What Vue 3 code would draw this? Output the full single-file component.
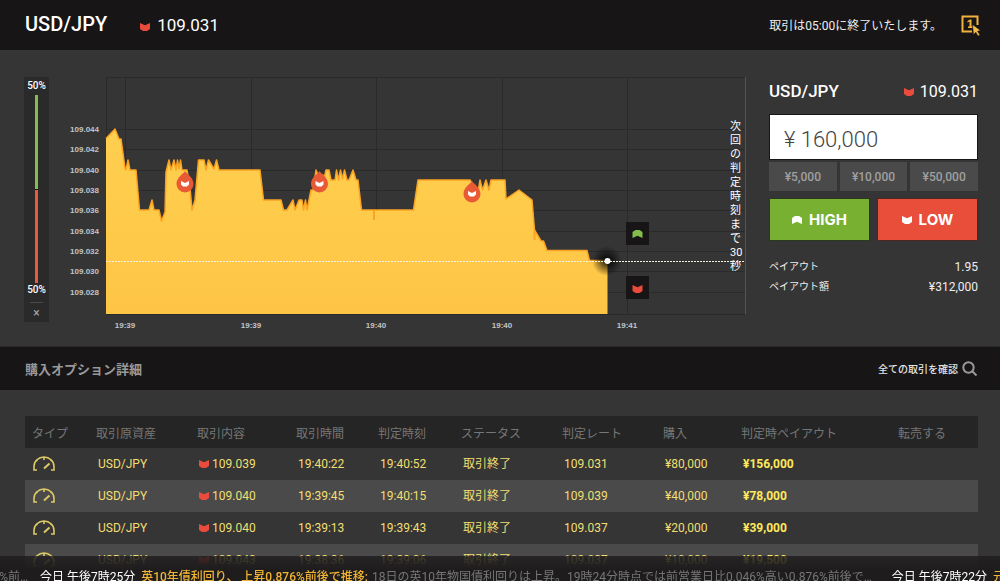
<script setup>
import { ref } from 'vue'

const amount = ref('¥ 160,000')
const presets = ['¥5,000', '¥10,000', '¥50,000']
const countdown = ['次', '回', 'の', '判', '定', '時', '刻', 'ま', 'で', '30', '秒']

const priceTicks = [
  { y: 129, label: '109.044' },
  { y: 149, label: '109.042' },
  { y: 170, label: '109.040' },
  { y: 190, label: '109.038' },
  { y: 210, label: '109.036' },
  { y: 231, label: '109.034' },
  { y: 251, label: '109.032' },
  { y: 271, label: '109.030' },
  { y: 292, label: '109.028' }
]
const timeTicks = [
  { x: 125, label: '19:39' },
  { x: 251, label: '19:39' },
  { x: 376, label: '19:40' },
  { x: 502, label: '19:40' },
  { x: 627, label: '19:41' }
]
const line =
  '106,138.5 115,129 119,139 121,139 125,168 126,170 128,160 130,170 136,170 139.5,210 149,210 152,200 154,210 159,210 161.5,221 165,212 166,172 169,160 171,170 174,160 176,170 177.5,160 179,169 180.5,160 182,170 187,170 190,188 192,210 195,200 198.5,160 204,160 206,170 208.5,160 214,169 216.5,160 219,170 260,170 263.5,200 281,200 283.5,210 287,210 293,200 295,210 299,200 302,200 303.5,210 305.5,200 307,210 309,200 311,190 313,190 316,170 318,175 323,175 324,179 326,170 329,170 331,180 335,180 336.5,170 338.5,180 340.5,170 342.5,179 344.5,170 347,180 349,180 353,170 356,180 358,180 361.5,210 413.5,210 418,180 470,180 478,192 480,180 482.5,190 486,180 489,190 491,180 505,180 506,199 519,190 532,200 534.5,230 541,241 543.5,241 547,250.5 587,250.5 589.5,260.5 607.5,260.5'
const area = line + ' 607.5,314 106,314'
const markers = [
  { x: 185, y: 183 },
  { x: 319.5, y: 183 },
  { x: 472, y: 193 }
]

const columns = ['タイプ', '取引原資産', '取引内容', '取引時間', '判定時刻', 'ステータス', '判定レート', '購入', '判定時ペイアウト', '転売する']
const trades = [
  { price: '109.039', start: '19:40:22', end: '19:40:52', rate: '109.031', cost: '¥80,000', payout: '¥156,000' },
  { price: '109.040', start: '19:39:45', end: '19:40:15', rate: '109.039', cost: '¥40,000', payout: '¥78,000' },
  { price: '109.040', start: '19:39:13', end: '19:39:43', rate: '109.037', cost: '¥20,000', payout: '¥39,000' },
  { price: '109.043', start: '19:38:36', end: '19:39:06', rate: '109.037', cost: '¥10,000', payout: '¥19,500' }
]
</script>

<template>
  <div class="page">
    <header class="topbar">
      <h1>USD/JPY</h1>
      <svg class="arrow" viewBox="0 0 10 8"><path d="M0 0L5 2.200L10 0V6L7 8H3L0 6Z" /></svg>
      <span class="top-price">109.031</span>
      <span class="notice">取引は05:00に終了いたします。</span>
      <button class="one-click" aria-label="ワンクリック取引">
        <svg viewBox="0 0 20 22">
          <path d="M11 16.500H1.500V1.500H16.500V10" fill="none" stroke="#f3b13c" stroke-width="2" />
          <path d="M6.500 6L9 4.500H10.500V11.500H11.500V13H7V11.500H8.500V6.500L6.500 7.500Z" fill="#f3b13c" />
          <path d="M11.500 9.500L19.500 15.500L16.500 16.200L19 20L17 21L14.800 17.200L12.500 19.500Z" fill="#f7bd49" stroke="#171516" stroke-width="0.500" />
        </svg>
      </button>
    </header>

    <main class="trade">
      <aside class="gauge">
        <b>50%</b>
        <div class="gauge-track"><i class="up"></i><i class="down"></i></div>
        <b>50%</b>
        <button class="gauge-close" aria-label="閉じる">×</button>
      </aside>

      <section class="chart">
        <svg viewBox="60 77 692 258">
          <defs>
            <linearGradient id="fill" x1="0" y1="0" x2="0" y2="1">
              <stop offset="0" stop-color="#ffcf4f" />
              <stop offset="1" stop-color="#fec545" />
            </linearGradient>
            <radialGradient id="halo">
              <stop offset="0" stop-color="#000" stop-opacity="0.9" />
              <stop offset="0.45" stop-color="#000" stop-opacity="0.5" />
              <stop offset="1" stop-color="#000" stop-opacity="0" />
            </radialGradient>
          </defs>
          <g class="grid">
            <path d="M106 77.500H745M106.500 77V314M106 314.500H745" />
            <path v-for="t in priceTicks" :key="t.y" :d="`M106 ${t.y + 0.5}H745`" />
            <path v-for="t in timeTicks" :key="t.x" :d="`M${t.x + 0.5} 77V314`" />
          </g>
          <path class="edge" d="M745.500 77V314" />
          <text v-for="t in priceTicks" :key="t.label" class="tick" x="99" :y="t.y + 3" text-anchor="end">{{ t.label }}</text>
          <text v-for="t in timeTicks" :key="t.x" class="tick" :x="t.x" y="328" text-anchor="middle">{{ t.label }}</text>
          <polygon :points="area" fill="url(#fill)" />
          <polyline :points="line" class="price-line" />
          <path d="M374 210V220M534.500 231V240" class="spike" />
          <circle cx="607" cy="261" r="15" fill="url(#halo)" />
          <path d="M106 261.500H745" class="now" />
          <circle cx="607.500" cy="261" r="3" fill="#fff" />
          <g v-for="m in markers" :key="m.x" :transform="`translate(${m.x} ${m.y})`">
            <path d="M0 -12C1.500 -9 8.500 -6 8.500 1A8.500 8.500 0 0 1 -8.500 1C-8.500 -6 -1.500 -9 0 -12Z" fill="#e85a36" />
            <path d="M-4 -2L0 0L4 -2V1.500L2 3.500H-2L-4 1.500Z" fill="#fff" />
          </g>
          <rect x="626" y="222" width="23" height="23" fill="#171516" />
          <path d="M632.500 232L635.500 230H639.500L642.500 232V238L637.500 235.800L632.500 238Z" fill="#83bd4d" />
          <rect x="626" y="276" width="23" height="23" fill="#171516" />
          <path d="M632.500 285L637.500 287.200L642.500 285V291L639.500 293H635.500L632.500 291Z" fill="#ea4b3d" />
        </svg>
        <div class="countdown"><span v-for="(c, i) in countdown" :key="i">{{ c }}</span></div>
      </section>

      <section class="order">
        <div class="order-head">
          <h2>USD/JPY</h2>
          <svg class="arrow" viewBox="0 0 10 8"><path d="M0 0L5 2.200L10 0V6L7 8H3L0 6Z" /></svg>
          <span>109.031</span>
        </div>
        <input v-model="amount" class="amount" type="text" aria-label="購入金額" />
        <div class="presets">
          <button v-for="p in presets" :key="p">{{ p }}</button>
        </div>
        <div class="actions">
          <button class="high">
            <svg viewBox="0 0 10 8"><path d="M0 8V2L3 0H7L10 2V8L5 5.800Z" /></svg>HIGH
          </button>
          <button class="low">
            <svg viewBox="0 0 10 8"><path d="M0 0L5 2.200L10 0V6L7 8H3L0 6Z" /></svg>LOW
          </button>
        </div>
        <dl class="payout">
          <div><dt>ペイアウト</dt><dd>1.95</dd></div>
          <div><dt>ペイアウト額</dt><dd>¥312,000</dd></div>
        </dl>
      </section>
    </main>

    <div class="history-bar">
      <h2>購入オプション詳細</h2>
      <a href="#all">全ての取引を確認
        <svg viewBox="0 0 16 16"><circle cx="6.500" cy="6.500" r="5.200" /><path d="M10.500 10.500L14.500 14.500" /></svg>
      </a>
    </div>

    <section class="history">
      <table>
        <colgroup>
          <col v-for="(c, i) in columns" :key="c" :class="'c' + i" />
        </colgroup>
        <thead>
          <tr><th v-for="c in columns" :key="c" scope="col">{{ c }}</th></tr>
        </thead>
        <tbody>
          <tr v-for="t in trades" :key="t.start">
            <td class="kind">
              <svg viewBox="0 0 22 16">
                <path d="M4 14H1V10.500A10 9.500 0 0 1 21 10.500V14H18M11 1V4M3.500 4L4.500 5M18.500 4L17.500 5" />
                <path d="M11 12.500L16.500 7.500" class="needle" />
              </svg>
            </td>
            <td>USD/JPY</td>
            <td><span class="deal"><svg class="arrow" viewBox="0 0 10 8"><path d="M0 0L5 2.200L10 0V6L7 8H3L0 6Z" /></svg>{{ t.price }}</span></td>
            <td>{{ t.start }}</td>
            <td>{{ t.end }}</td>
            <td>取引終了</td>
            <td>{{ t.rate }}</td>
            <td>{{ t.cost }}</td>
            <td class="won">{{ t.payout }}</td>
            <td></td>
          </tr>
        </tbody>
      </table>
    </section>

    <footer class="ticker">
      <p class="previous">876%前…</p>
      <p><time>今日 午後7時25分</time><b>英10年債利回り、 上昇0.876%前後で推移:</b><span>18日の英10年物国債利回りは上昇。19時24分時点では前営業日比0.046%高い0.876%前後で…</span></p>
      <p><time>今日 午後7時22分</time><b>元</b></p>
    </footer>
  </div>
</template>

<style>
body {
  background: #353535;
}
</style>

<style scoped>
.page {
  height: 100vh;
  overflow: hidden;
  background: #353535;
  color: #fff;
  font-family: Roboto, "Noto Sans CJK JP", sans-serif;
  font-size: 12px;
}
h1, h2, p, dl, dd {
  margin: 0;
}
button {
  border: 0;
  padding: 0;
  font: inherit;
  cursor: pointer;
}
.arrow {
  width: 10px;
  height: 8px;
  fill: #ea4b3d;
  flex: none;
}
.topbar {
  display: flex;
  align-items: center;
  height: 50px;
  padding: 0 19px 2px 25px;
  box-sizing: border-box;
  background: #171516;
}
.topbar h1 {
  margin-right: 33px;
  font-size: 20px;
  font-weight: 500;
}
.topbar .arrow {
  margin-top: 6px;
}
.top-price {
  margin-left: 7px;
  padding-top: 2px;
  font-size: 17px;
}
.notice {
  margin-left: auto;
  margin-right: 19px;
  color: #eee;
}
.one-click {
  width: 20px;
  height: 22px;
  margin-top: 4px;
  background: none;
}
.one-click svg {
  display: block;
}
.trade {
  display: flex;
  align-items: flex-start;
  height: 297px;
  padding: 27px 22px 0 24px;
  box-sizing: border-box;
  border-bottom: 1px solid #2a2a2a;
}
.gauge {
  display: flex;
  flex-direction: column;
  align-items: center;
  width: 25px;
  height: 245px;
  margin-right: 11px;
  background: #2a2a2a;
}
.gauge b {
  font-size: 10px;
  font-weight: 500;
  line-height: 18px;
}
.gauge-track {
  display: flex;
  flex-direction: column;
  flex: 1;
  width: 3px;
  gap: 1px;
  background: #171516;
}
.gauge-track i {
  flex: 1;
}
.gauge-track .up {
  background: #83bd4d;
}
.gauge-track .down {
  background: #ea5a3d;
}
.gauge > b:last-of-type {
  line-height: 14px;
}
.gauge-close {
  width: 13px;
  height: 20px;
  margin-top: 5px;
  border-top: 1px solid #4a4a4a;
  background: none;
  color: #aaa;
  font-size: 12px;
}
.chart {
  position: relative;
  flex: 1;
  min-width: 0;
  margin-right: 17px;
}
.chart svg {
  display: block;
  width: 100%;
}
.grid path {
  stroke: #2a2a2a;
}
.edge {
  stroke: #555;
}
.tick {
  fill: #c4c4c4;
  font-family: "Liberation Sans", sans-serif;
  font-size: 8px;
  font-weight: 700;
}
.price-line {
  fill: none;
  stroke: #fca321;
  stroke-width: 1.5;
  stroke-linejoin: round;
}
.spike {
  stroke: #fca321;
  stroke-width: 2;
}
.now {
  stroke: #f4f0e2;
  stroke-dasharray: 2 1;
}
.countdown {
  position: absolute;
  top: 43px;
  right: 8px;
  display: flex;
  flex-direction: column;
  width: 14px;
  font-size: 11px;
  line-height: 14px;
}
.order {
  width: 209px;
}
.order-head {
  display: flex;
  align-items: center;
  height: 28px;
  margin-bottom: 9px;
  font-size: 16px;
}
.order-head h2 {
  margin-right: auto;
  font-size: 17px;
  font-weight: 500;
}
.order-head .arrow {
  margin-right: 6px;
  margin-top: 2px;
}
.amount {
  display: block;
  width: 100%;
  height: 46px;
  padding: 4px 14px 0;
  box-sizing: border-box;
  border: 1px solid #171516;
  background: #fff;
  color: #444;
  font-family: Roboto, sans-serif;
  font-size: 22px;
  font-weight: 300;
}
.presets {
  display: grid;
  grid-template-columns: repeat(3, 1fr);
  gap: 3px;
  margin-top: 2px;
}
.presets button {
  height: 29px;
  background: #4a4a4a;
  color: #a0a0a0;
  font-size: 12px;
  font-weight: 500;
}
.actions {
  display: grid;
  grid-template-columns: 1fr 1fr;
  gap: 7px;
  margin-top: 7px;
}
.actions button {
  display: flex;
  align-items: center;
  justify-content: center;
  gap: 7px;
  height: 43px;
  border: 1px solid #2b3a1c;
  color: #fff;
  font-family: Inter, "Open Sans", sans-serif;
  font-size: 15px;
  font-weight: 700;
}
.actions .high {
  background: #78b131;
}
.actions .low {
  border-color: #4d2622;
  background: #e84e39;
}
.actions svg {
  width: 10px;
  height: 8px;
  fill: #fff;
}
.payout {
  margin-top: 16px;
  color: #eee;
}
.payout div {
  display: flex;
  justify-content: space-between;
  line-height: 20px;
}
.payout dt {
  font-size: 10px;
}
.history-bar {
  display: flex;
  align-items: center;
  justify-content: space-between;
  height: 43px;
  padding: 0 22px 0 25px;
  box-sizing: border-box;
  background: #171516;
}
.history-bar h2 {
  color: #999;
  font-size: 13px;
  font-weight: 700;
}
.history-bar a {
  display: flex;
  align-items: center;
  gap: 4px;
  color: #e4e4e4;
  font-size: 10px;
  font-weight: 500;
  text-decoration: none;
}
.history-bar a svg {
  width: 16px;
  height: 16px;
  fill: none;
  stroke: #999;
  stroke-width: 2;
}
.history {
  padding: 26px 22px 0 25px;
}
table {
  width: 100%;
  table-layout: fixed;
  border-collapse: collapse;
}
.c0 { width: 64px; }
.c1 { width: 101px; }
.c2 { width: 99px; }
.c3 { width: 82px; }
.c4 { width: 83px; }
.c5 { width: 101px; }
.c6 { width: 101px; }
.c7 { width: 78px; }
.c8 { width: 157px; }
.c9 { width: 87px; }
th, td {
  height: 32px;
  padding: 0 0 0 9px;
  text-align: left;
  white-space: nowrap;
}
th {
  padding-left: 7px;
  background: #252525;
  color: #777;
  font-size: 12px;
  font-weight: 400;
}
td {
  color: #f1df72;
  font-size: 12px;
  line-height: 16px;
}
tbody tr:nth-child(even) {
  background: #4a4a4a;
}
.kind {
  padding-left: 8px;
}
.kind svg {
  display: block;
  width: 22px;
  height: 16px;
  fill: none;
  stroke: #dcc965;
  stroke-width: 1.6;
}
.kind .needle {
  stroke-width: 2;
}
.deal {
  display: flex;
  align-items: center;
  gap: 3px;
}
.won {
  color: #ffe95c;
  font-weight: 700;
}
.ticker {
  position: fixed;
  inset: auto 0 0;
  display: flex;
  height: 25px;
  overflow: hidden;
  background: linear-gradient(rgba(30, 28, 29, 0.8), #1e1c1d 60%);
  color: #777;
  font-size: 12px;
  line-height: 20px;
  white-space: nowrap;
}
.ticker p {
  flex: none;
  margin-right: 20px;
  padding-top: 11px;
}
.ticker .previous {
  display: flex;
  justify-content: flex-end;
  width: 28px;
  margin-right: 12px;
}
.ticker time {
  margin-right: 6px;
  color: #fff;
}
.ticker b {
  margin-right: 4px;
  color: #f0b435;
  font-weight: 500;
}
</style>
